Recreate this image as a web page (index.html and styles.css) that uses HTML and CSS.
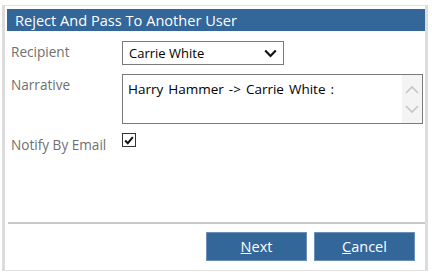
FILE: index.html
```html
<!DOCTYPE html>
<html lang="en">
<head>
    <meta charset="UTF-8">
    <title>Reject And Pass To Another User</title>
    <link rel="stylesheet" href="styles.css">
</head>
<body>
    <div class="dialog">
        <div class="dialog-title">Reject And Pass To Another User</div>

        <div class="form-body">
            <div class="form-row">
                <label class="field-label">Recipient</label>
                <div class="select-box">
                    <span>Carrie White</span>
                    <svg class="chevron" width="13" height="9" viewBox="0 0 13 9">
                        <path d="M1.2 1.5 L6.5 7 L11.8 1.5" fill="none" stroke="#111" stroke-width="2.2"/>
                    </svg>
                </div>
            </div>

            <div class="form-row">
                <label class="field-label">Narrative</label>
                <div class="textarea-box">
                    <span class="textarea-text">Harry Hammer -&gt; Carrie White :</span>
                    <div class="scroll-arrows">
                        <svg width="14" height="9" viewBox="0 0 14 9">
                            <path d="M1 8 L7 2 L13 8" fill="none" stroke="#c6c6c6" stroke-width="1.6"/>
                        </svg>
                        <svg width="14" height="9" viewBox="0 0 14 9">
                            <path d="M1 1 L7 7 L13 1" fill="none" stroke="#c6c6c6" stroke-width="1.6"/>
                        </svg>
                    </div>
                </div>
            </div>

            <div class="form-row">
                <label class="field-label notify-label">Notify By Email</label>
                <span class="checkbox">
                    <svg width="10" height="9" viewBox="0 0 10 9">
                        <path d="M1.2 4.5 L3.8 7.2 L8.8 1.2" fill="none" stroke="#111" stroke-width="2"/>
                    </svg>
                </span>
            </div>
        </div>

        <div class="dialog-footer">
            <button class="btn"><u>N</u>ext</button>
            <button class="btn"><u>C</u>ancel</button>
        </div>
    </div>
</body>
</html>
```

FILE: styles.css
```css
body {
    margin: 0;
    font-family: "Open Sans", "Liberation Sans", sans-serif;
    background: #ffffff;
}
.dialog {
    margin: 5px 0 0 2px;
    width: 426px;
    height: 266px;
    border: 1px solid #e2e2e2;
    border-left: 3px solid #dcdcdc;
    border-right: 3px solid #dcdcdc;
    box-sizing: border-box;
    padding: 3px 0 0 2px;
    display: flex;
    flex-direction: column;
}
.dialog-title {
    background-color: #336699;
    color: #ffffff;
    font-size: 14.6px;
    height: 22px;
    line-height: 22px;
    padding-left: 8px;
    white-space: nowrap;
}
.form-body {
    flex: 1;
    padding: 10px 0 0 4px;
    display: flex;
    flex-direction: column;
    gap: 9px;
}
.form-row {
    display: flex;
    align-items: flex-start;
}
.field-label {
    width: 111px;
    flex-shrink: 0;
    color: #707070;
    font-size: 13.6px;
    padding-top: 1px;
}
.notify-label {
    padding-top: 2px;
}
.select-box {
    width: 162px;
    height: 24px;
    border: 1px solid #7a7a7a;
    box-sizing: border-box;
    display: flex;
    align-items: center;
    justify-content: space-between;
    padding: 0 6px 0 6px;
    font-size: 13px;
    color: #000;
}
.textarea-box {
    width: 301px;
    height: 50px;
    border: 1px solid #7a7a7a;
    box-sizing: border-box;
    display: flex;
    justify-content: space-between;
    font-size: 13.5px;
    word-spacing: 1.5px;
    color: #000;
}
.textarea-text {
    padding: 5px 0 0 5px;
}
.scroll-arrows {
    width: 20px;
    background: #f4f4f4;
    display: flex;
    flex-direction: column;
    justify-content: space-around;
    align-items: center;
    padding: 4px 0;
}
.checkbox {
    width: 12px;
    height: 12px;
    border: 1px solid #333;
    display: flex;
    align-items: center;
    justify-content: center;
}
.dialog-footer {
    border-top: 2px solid #c8c8c8;
    margin: 0 0 0 1px;
    height: 48px;
    box-sizing: border-box;
    display: flex;
    justify-content: flex-end;
    align-items: flex-start;
    gap: 7px;
    padding: 8px 10px 0 0;
}
.btn {
    width: 101px;
    height: 29px;
    background-color: #336699;
    color: #ffffff;
    border: 1px solid #6a8fb8;
    font-family: "Open Sans", "Liberation Sans", sans-serif;
    font-size: 14.5px;
    cursor: pointer;
}
```
